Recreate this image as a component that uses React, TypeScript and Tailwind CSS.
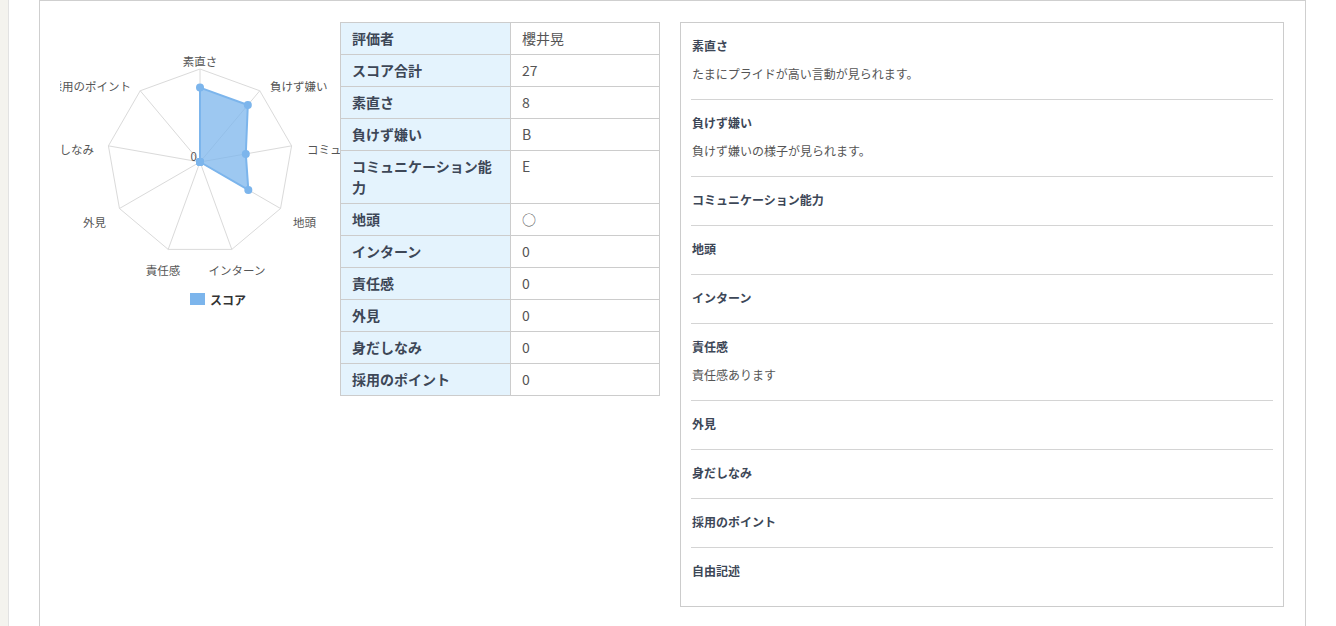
import React from "react";

const labels = [
  "素直さ",
  "負けず嫌い",
  "コミュニケーション能力",
  "地頭",
  "インターン",
  "責任感",
  "外見",
  "身だしなみ",
  "採用のポイント",
];
const values = [8, 8, 5, 6, 0, 0, 0, 0, 0];

const labelPos: { x: number; y: number; anchor: "start" | "middle" | "end" }[] = [
  { x: 140, y: 39, anchor: "middle" },
  { x: 210, y: 64, anchor: "start" },
  { x: 247, y: 127, anchor: "start" },
  { x: 233, y: 200, anchor: "start" },
  { x: 177, y: 248, anchor: "middle" },
  { x: 103, y: 248, anchor: "middle" },
  { x: 46, y: 200, anchor: "end" },
  { x: 34, y: 127, anchor: "end" },
  { x: 71, y: 64, anchor: "end" },
];

function Radar() {
  const cx = 140;
  const cy = 140;
  const R = 93;
  const pt = (i: number, r: number) => {
    const a = (i * 40 * Math.PI) / 180;
    return [cx + r * Math.sin(a), cy - r * Math.cos(a)];
  };
  const outer = labels.map((_, i) => pt(i, R));
  const data = values.map((v, i) => pt(i, (v / 10) * R));
  return (
    <svg width="280" height="300" viewBox="0 0 280 300" className="block overflow-hidden" style={{ fontFamily: '"Noto Sans CJK JP", "Noto Sans", sans-serif' }}>
      <polygon points={outer.map((p) => p.join(",")).join(" ")} fill="none" stroke="#dadada" strokeWidth="1" />
      {outer.map((p, i) => (
        <line key={i} x1={cx} y1={cy} x2={p[0]} y2={p[1]} stroke="#dadada" strokeWidth="1" />
      ))}
      <polygon points={data.map((p) => p.join(",")).join(" ")} fill="rgba(124,181,236,0.75)" stroke="#7cb5ec" strokeWidth="2" strokeLinejoin="round" />
      {data.map((p, i) => (
        <circle key={i} cx={p[0]} cy={p[1]} r="4" fill="#7cb5ec" />
      ))}
      {labels.map((l, i) => (
        <text key={l} x={labelPos[i].x} y={labelPos[i].y} textAnchor={labelPos[i].anchor} dominantBaseline="central" fontSize="11.5" fill="#555">
          {l}
        </text>
      ))}
      <text x="137" y="134" textAnchor="end" dominantBaseline="central" fontSize="11.5" fill="#555">
        0
      </text>
      <rect x="130" y="271" width="15" height="12" fill="#7cb5ec" />
      <text x="150" y="277" dominantBaseline="central" fontSize="12" fontWeight="bold" fill="#333">
        スコア
      </text>
    </svg>
  );
}

const rows: [string, string][] = [
  ["評価者", "櫻井晃"],
  ["スコア合計", "27"],
  ["素直さ", "8"],
  ["負けず嫌い", "B"],
  ["コミュニケーション能力", "E"],
  ["地頭", "○"],
  ["インターン", "0"],
  ["責任感", "0"],
  ["外見", "0"],
  ["身だしなみ", "0"],
  ["採用のポイント", "0"],
];

const comments: [string, string][] = [
  ["素直さ", "たまにプライドが高い言動が見られます。"],
  ["負けず嫌い", "負けず嫌いの様子が見られます。"],
  ["コミュニケーション能力", ""],
  ["地頭", ""],
  ["インターン", ""],
  ["責任感", "責任感あります"],
  ["外見", ""],
  ["身だしなみ", ""],
  ["採用のポイント", ""],
  ["自由記述", ""],
];

export default function App() {
  return (
    <div
      className="flex w-[1336px] h-[626px] overflow-hidden bg-[#f4f3ee]"
      style={{ fontFamily: '"Noto Sans CJK JP", "Noto Sans", sans-serif' }}
    >
      <div className="w-[8px] shrink-0" />
      <div className="flex flex-1 bg-white border-l border-[#e2e2e2] pl-[30px]">
        <div className="flex w-[1267px] h-full border-l border-r border-t border-[#cfcfcf] pl-[20px] pt-[21px]">
          <div className="w-[280px] shrink-0">
            <Radar />
          </div>
          <div className="w-[320px] shrink-0">
            <table className="w-[320px] border-collapse border border-[#cccccc] text-[14px] leading-[21px] table-fixed">
              <tbody>
                {rows.map(([k, v]) => (
                  <tr key={k}>
                    <th className="w-[170px] border border-[#cccccc] bg-[#e4f3fd] px-[11px] py-[5px] text-left align-top font-bold text-[#3d4757]">
                      {k}
                    </th>
                    <td className="border border-[#cccccc] px-[11px] py-[5px] align-top text-[#555]">{v}</td>
                  </tr>
                ))}
              </tbody>
            </table>
          </div>
          <div className="ml-[20px] w-[604px] shrink-0 self-start border border-[#cccccc] px-[10px] pb-[10px]">
            {comments.map(([t, d], i) => (
              <div
                key={t}
                className={
                  i === comments.length - 1
                    ? "pt-[14px] pb-[16px] pl-[1px]"
                    : "pt-[14px] pb-[16px] pl-[1px] border-b border-[#d4d4d4]"
                }
              >
                <div className="text-[12px] leading-[18px] font-bold text-[#3d4757]">{t}</div>
                {d && <div className="mt-[10px] text-[12px] leading-[18px] text-[#555]">{d}</div>}
              </div>
            ))}
          </div>
        </div>
      </div>
    </div>
  );
}
